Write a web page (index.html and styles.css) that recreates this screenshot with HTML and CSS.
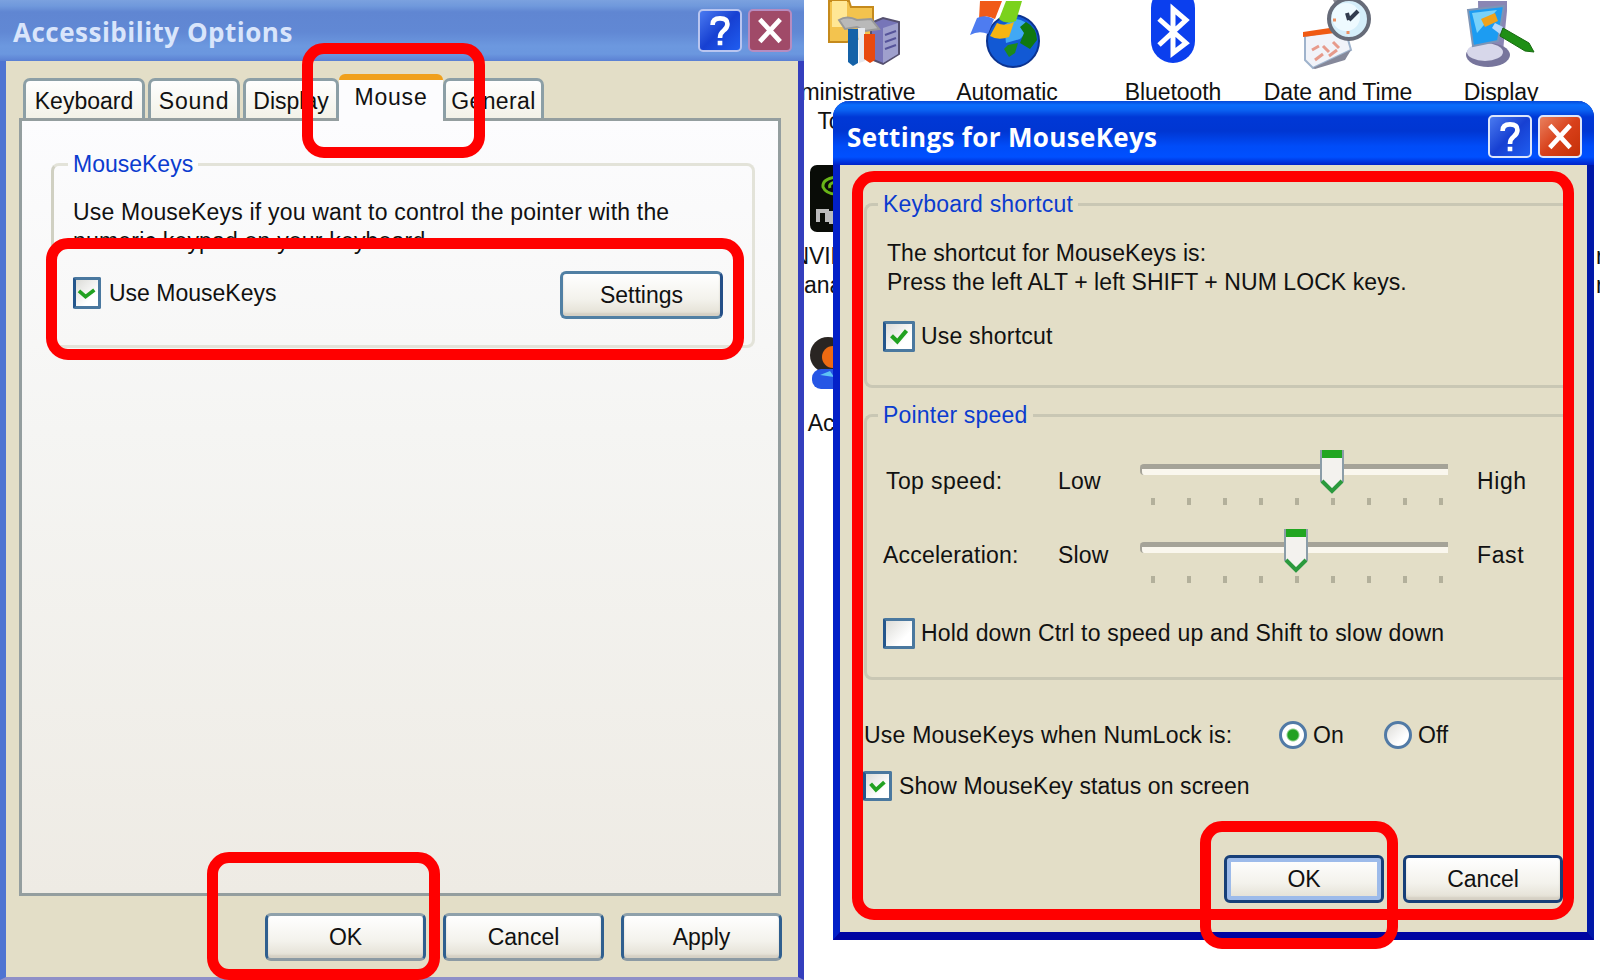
FILE: index.html
```html
<!DOCTYPE html>
<html lang="en">
<head>
  <meta charset="UTF-8" />
  <title>Accessibility Options</title>
  <link rel="stylesheet" href="styles.css">
</head>
<body>
  <div class="desktop">

    <!-- Control panel icons -->
    <div class="cp-item admin">
      <svg width="76" height="68" viewBox="0 0 76 68">
        <path d="M2 0H22L24 6H46V34L20 41H2Z" fill="#f3c34e" stroke="#c58a1c" stroke-width="2"/>
        <path d="M5 0H20V26H5Z" fill="#ffe795"/>
        <path d="M44 22L56 17L72 21V53L56 63L44 58Z" fill="#7775b8" stroke="#55506f" stroke-width="2"/>
        <path d="M56 27L71 22V53L56 62Z" fill="#9fa0cd"/>
        <path d="M58 34L69 30M58 41L69 37M58 48L69 44" stroke="#56549a" stroke-width="2"/>
        <path d="M12 19Q20 14 30 19L44 18L52 28L38 30L30 26L18 28Z" fill="#b9b9b9" stroke="#999" stroke-width="2"/>
        <path d="M21 28H31V62L26 65L21 61Z" fill="#1562a8"/>
        <path d="M31 27H38V60L32 62Z" fill="#e7e9ee"/>
        <path d="M37 33H48V59L43 62L37 58Z" fill="#e8490f"/>
      </svg>
      <p>Administrative<br>Tools</p>
    </div>
    <div class="cp-item auto">
      <svg width="74" height="68" viewBox="0 0 74 68">
        <circle cx="43" cy="40" r="26" fill="#1259d4" stroke="#0c3390" stroke-width="2"/>
        <path d="M44 18Q56 18 60 28L50 38L36 42L34 24Z" fill="#41a8f5"/>
        <path d="M56 21Q67 27 67 39L60 48L50 42L54 32L50 26Z" fill="#10780f"/>
        <path d="M38 44L48 42L45 52L39 56L34 48Z" fill="#1d8a1a"/>
        <path d="M10 0H32L25 18Q16 13 9 18Z" fill="#f05a18"/>
        <path d="M36 0H52L46 20Q36 24 29 18Z" fill="#7bd21c"/>
        <path d="M7 17Q15 13 24 18L18 33Q9 29 0 34Z" fill="#4e7cf0"/>
        <path d="M27 22Q35 26 44 21L39 36Q28 40 20 35Z" fill="#f7b512"/>
      </svg>
      <p>Automatic</p>
    </div>
    <div class="cp-item blue">
      <svg width="46" height="64" viewBox="0 0 46 64">
        <rect x="1" y="-14" width="44" height="77" rx="22" fill="#0b3fee"/>
        <path d="M9 19L36 43L23 53V9L36 20L9 45" fill="none" stroke="#fff" stroke-width="5"/>
      </svg>
      <p>Bluetooth</p>
    </div>
    <div class="cp-item date">
      <svg width="70" height="70" viewBox="0 0 70 70">
        <path d="M2 36L42 29L48 50L10 68L2 60Z" fill="#f1f3f9" stroke="#9fb3cc" stroke-width="2"/>
        <path d="M10 68L48 50L42 60L12 69Z" fill="#85889a"/>
        <path d="M0 32L40 26V32L0 37Z" fill="#f05a13"/>
        <path d="M9 50L16 46M20 46L26 52M30 42L36 48M12 60L20 54M26 56L34 50" stroke="#e79a8b" stroke-width="3"/>
        <path d="M30 0H56L50 8H34Z" fill="#8d8d96"/>
        <circle cx="46" cy="19" r="20" fill="#d5eefa" stroke="#666b78" stroke-width="4"/>
        <circle cx="43" cy="17" r="14" fill="#eefaff"/>
        <path d="M46 20L55 11M46 20L44 13" stroke="#333c4e" stroke-width="4"/>
        <path d="M45 31V34M30 20H33" stroke="#ec8f63" stroke-width="3"/>
      </svg>
      <p>Date and Time</p>
    </div>
    <div class="cp-item disp">
      <svg width="72" height="68" viewBox="0 0 72 68">
        <path d="M13 0H42V10L38 50H14Z" fill="#8a86b4"/>
        <ellipse cx="23" cy="54" rx="22" ry="12" fill="#77759c"/>
        <ellipse cx="20" cy="51" rx="18" ry="9" fill="#d7d7ea"/>
        <path d="M3 9L39 5L33 40L8 45Z" fill="#1c9cf2" stroke="#7e95b6" stroke-width="2"/>
        <path d="M7 12L32 9L12 32Z" fill="#79d2fa"/>
        <path d="M16 18L30 12L33 20L20 26Z" fill="#efa21b"/>
        <path d="M30 22L38 26L35 33L27 27Z" fill="#b8d8f8"/>
        <path d="M38 27L64 42L69 51L60 50L35 35Z" fill="#1f8f15" stroke="#176a10"/>
      </svg>
      <p>Display</p>
    </div>
    <div class="cp-item nvidia">
      <svg width="40" height="68" viewBox="0 0 40 68">
        <rect x="0" y="0" width="60" height="67" rx="7" fill="#090c07"/>
        <path d="M26 12Q12 14 13 22Q16 29 26 29M26 17Q18 18 20 23" fill="none" stroke="#69b518" stroke-width="3"/>
        <path d="M8 57V46H17V57M21 46V57H30" fill="none" stroke="#bbb" stroke-width="4"/>
      </svg>
      <p>NVIEW<br>Manager</p>
    </div>
    <div class="cp-item user">
      <svg width="40" height="52" viewBox="0 0 40 52">
        <circle cx="18" cy="18" r="18" fill="#292522"/>
        <circle cx="23" cy="20" r="11" fill="#ed6a12"/>
        <rect x="2" y="32" width="40" height="20" rx="9" fill="#2656e5"/>
        <path d="M10 38L20 34L24 40Z" fill="#5ec2f5"/>
      </svg>
      <p>User Accounts</p>
    </div>
    <div class="cp-item edge"><p>r<br>r</p></div>

    <!-- Accessibility Options -->
    <div class="window options">
      <div class="titlebar">
        <h1>Accessibility Options</h1>
        <span class="tb-btn help">
          <svg viewBox="0 0 42 42"><path d="M13 15Q13 8 21 8Q29 8 29 14Q29 18 25 21Q21 24 21 29M21 32V37" fill="none" stroke="#fff" stroke-width="5"/></svg>
        </span>
        <span class="tb-btn close">
          <svg viewBox="0 0 42 42"><path d="M10 9L32 33M32 9L10 33" stroke="#fff" stroke-width="5"/></svg>
        </span>
      </div>

      <div class="tabs">
        <div class="tab keyboard"><span>Keyboard</span></div>
        <div class="tab sound"><span>Sound</span></div>
        <div class="tab display"><span>Display</span></div>
        <div class="tab mouse active"><span>Mouse</span></div>
        <div class="tab general"><span>General</span></div>
      </div>

      <div class="panel">
        <fieldset>
          <legend>MouseKeys</legend>
          <p class="intro">Use MouseKeys if you want to control the pointer with the<br>numeric keypad on your keyboard.</p>
          <div class="use-row">
            <label class="check">
              <svg class="box" viewBox="0 0 30 30"><path d="M4 12L13 20L25 11" /></svg>
              <span>Use MouseKeys</span>
            </label>
            <button class="btn settings">Settings</button>
          </div>
        </fieldset>
      </div>

      <div class="buttons">
        <button class="btn">OK</button>
        <button class="btn">Cancel</button>
        <button class="btn">Apply</button>
      </div>
    </div>

    <!-- Settings for MouseKeys -->
    <div class="window mousekeys">
      <div class="titlebar">
        <h1>Settings for MouseKeys</h1>
        <span class="tb-btn help">
          <svg viewBox="0 0 42 42"><path d="M13 15Q13 8 21 8Q29 8 29 14Q29 18 25 21Q21 24 21 29M21 32V37" fill="none" stroke="#fff" stroke-width="5"/></svg>
        </span>
        <span class="tb-btn close">
          <svg viewBox="0 0 42 42"><path d="M10 9L32 33M32 9L10 33" stroke="#fff" stroke-width="5"/></svg>
        </span>
      </div>

      <div class="mk-body">
        <fieldset class="shortcut">
          <legend>Keyboard shortcut</legend>
          <p>The shortcut for MouseKeys is:<br>Press the left ALT + left SHIFT + NUM LOCK keys.</p>
          <label class="check">
            <svg class="box" viewBox="0 0 30 30"><path d="M6 14L13 21L24 8" /></svg>
            <span>Use shortcut</span>
          </label>
        </fieldset>

        <fieldset class="speed">
          <legend>Pointer speed</legend>
          <div class="slider-row top">
            <span class="name">Top speed:</span>
            <span class="from">Low</span>
            <div class="slider">
              <div class="track"></div>
              <div class="ticks"><i></i><i></i><i></i><i></i><i></i><i></i><i></i><i></i><i></i></div>
              <svg class="thumb" width="26" height="46" viewBox="0 0 26 46">
                <path d="M2 2H24V32L13 43L2 32Z" fill="#f3f2ee" stroke="#8b9da8" stroke-width="2"/>
                <path d="M3 1H23V9H3Z" fill="#21a621"/>
                <path d="M3 32L13 42L23 32" fill="none" stroke="#2b9a3d" stroke-width="4"/>
              </svg>
            </div>
            <span class="to">High</span>
          </div>
          <div class="slider-row accel">
            <span class="name">Acceleration:</span>
            <span class="from">Slow</span>
            <div class="slider">
              <div class="track"></div>
              <div class="ticks"><i></i><i></i><i></i><i></i><i></i><i></i><i></i><i></i><i></i></div>
              <svg class="thumb" width="26" height="46" viewBox="0 0 26 46">
                <path d="M2 2H24V32L13 43L2 32Z" fill="#f3f2ee" stroke="#8b9da8" stroke-width="2"/>
                <path d="M3 1H23V9H3Z" fill="#21a621"/>
                <path d="M3 32L13 42L23 32" fill="none" stroke="#2b9a3d" stroke-width="4"/>
              </svg>
            </div>
            <span class="to">Fast</span>
          </div>
          <label class="check hold">
            <svg class="box" viewBox="0 0 30 30"></svg>
            <span>Hold down Ctrl to speed up and Shift to slow down</span>
          </label>
        </fieldset>

        <div class="numlock">
          <span class="question">Use MouseKeys when NumLock is:</span>
          <span class="radio on"></span><span class="on-text">On</span>
          <span class="radio"></span><span>Off</span>
        </div>
        <label class="check status">
          <svg class="box" viewBox="0 0 30 30"><path d="M6 12L13 20L24 10" /></svg>
          <span>Show MouseKey status on screen</span>
        </label>

        <div class="mk-buttons">
          <button class="btn default">OK</button>
          <button class="btn">Cancel</button>
        </div>
      </div>
    </div>

    <!-- Red callouts -->
    <div class="mark mark-tab"></div>
    <div class="mark mark-use"></div>
    <div class="mark mark-ok"></div>
    <div class="mark mark-settings"></div>
    <div class="mark mark-ok2"></div>
  </div>
</body>
</html>
```
FILE: styles.css
```css
* {
  box-sizing: border-box;
}

body {
  margin: 0;
  background: #fff;
  font-family: "Liberation Sans", Arial, sans-serif;
  font-size: 23px;
  line-height: 29px;
  color: #111;
  overflow: hidden;
}

p, h1, fieldset, legend {
  margin: 0;
  padding: 0;
}

.desktop {
  position: relative;
  width: 1600px;
  height: 980px;
  overflow: hidden;
}

/* control panel icons */
.cp-item {
  position: absolute;
  top: 0;
  display: flex;
  flex-direction: column;
  align-items: center;
  text-align: center;
  white-space: nowrap;
}

.cp-item svg {
  height: 70px;
}

.cp-item p {
  margin-top: 8px;
  letter-spacing: -0.1px;
}

.admin { left: 770px; width: 148px; }
.admin svg { margin-left: 42px; }
.auto { left: 932px; width: 150px; }
.blue { left: 1098px; width: 150px; }
.blue svg { height: 64px; }
.blue p { margin-top: 14px; }
.date { left: 1258px; width: 160px; }
.disp { left: 1426px; width: 150px; }
.nvidia { left: 770px; top: 164px; width: 120px; }
.user { left: 758px; top: 337px; width: 140px; }
.user svg { height: 52px; margin-left: 4px; }
.user p { margin-top: 20px; }
.edge { left: 1596px; top: 234px; }

/* windows */
.window {
  position: absolute;
  background: #e3dec7;
}

.options {
  left: 0;
  top: 0;
  width: 804px;
  height: 980px;
  border: solid #4f74d2;
  border-width: 0 6px 3px;
  border-right-color: #343ebd;
  border-bottom-color: #8f90c8;
}

.mousekeys {
  left: 833px;
  top: 101px;
  width: 761px;
  height: 839px;
  border: solid #0320c8;
  border-width: 0 7px 8px;
  border-right-color: #0018a8;
  border-bottom-color: #0004a2;
  border-radius: 16px 16px 0 0;
}

.titlebar {
  display: flex;
  align-items: center;
}

.options .titlebar {
  height: 61px;
  margin: 0 -6px;
  padding: 0 12px 0 13px;
  background: linear-gradient(#7ba1df 0, #7099dc 6px, #6086d2 12px, #6188d4 32px, #6c98df 46px, #6b97df 54px, #5b80d3 61px);
}

.mousekeys .titlebar {
  height: 64px;
  margin: 0 -7px;
  padding: 6px 12px 0 14px;
  background: linear-gradient(#0548d8 0, #0a6dfc 4px, #0a62f2 9px, #0038d6 16px, #0036d2 30px, #004cf8 45px, #0050ff 56px, #0023c8 64px);
  border-radius: 16px 16px 0 0;
}

h1 {
  flex: 1;
  padding-top: 3px;
  font-family: "Open Sans", "Noto Sans", sans-serif;
  font-size: 26px;
  font-weight: 700;
  letter-spacing: 0.35px;
  color: #fff;
  white-space: nowrap;
}

.options h1 {
  color: #d9e5fb;
  letter-spacing: 0.5px;
}

.tb-btn {
  width: 44px;
  height: 43px;
  border: 2px solid #dce6fb;
  border-radius: 5px;
  margin-left: 6px;
}

.tb-btn svg {
  display: block;
  width: 100%;
  height: 100%;
}

.help { background: linear-gradient(135deg, #4a7af0, #1740d2 50%, #1f5df0); }
.close { background: linear-gradient(135deg, #e9805e, #d8401a 50%, #c53008); }

.options .tb-btn { border-color: #b9c5f0; }
.options .close { background: #a04a68; border-color: #b78cc0; }

/* tabs */
.tabs {
  display: flex;
  align-items: flex-end;
  height: 57px;
  padding-left: 17px;
}

.tab {
  height: 40px;
  border: 3px solid #8c9fa6;
  border-bottom: 0;
  border-radius: 7px 7px 0 0;
  background: linear-gradient(#fefefe, #f3f2e8);
  display: flex;
  justify-content: center;
  align-items: center;
  margin-right: 3px;
  padding-top: 4px;
}

.keyboard { width: 122px; }
.sound { width: 92px; letter-spacing: 0.8px; }
.display { width: 96px; margin-right: 0; }

.tab.active {
  width: 104px;
  height: 47px;
  margin: 0 0 -3px;
  padding-top: 0;
  padding-bottom: 6px;
  border: 0;
  border-top: 6px solid #f0a01c;
  background: #fcfcfe;
  border-radius: 6px 6px 0 0;
  position: relative;
  letter-spacing: 0.8px;
}

.general { width: 101px; letter-spacing: 0.4px; }

.panel {
  width: 762px;
  height: 778px;
  margin-left: 13px;
  padding: 29px 23px 0 29px;
  border: 3px solid #949e9f;
  background: linear-gradient(#fcfcfe, #f5f5f3 40%, #eeebe4);
}

fieldset {
  border: 3px solid #d0d0bf;
  border-radius: 8px;
  min-width: 0;
}

legend {
  color: #0b3ccf;
  padding: 0 5px;
}

.panel fieldset {
  height: 198px;
  padding: 0 6px 0 19px;
  border-color: #e3e3d9;
  border-left-color: #d0d0c2;
}

.panel legend {
  margin-left: -5px;
}

.intro {
  padding-top: 19px;
  letter-spacing: 0.19px;
  white-space: nowrap;
}

.use-row {
  display: flex;
  justify-content: space-between;
  align-items: center;
  margin-top: 15px;
  padding-right: 23px;
}

.use-row .check {
  padding-bottom: 4px;
}

.use-row .box { width: 28px; height: 32px; margin-right: 8px; }

.check {
  display: flex;
  align-items: center;
  white-space: nowrap;
}

.box {
  width: 32px;
  height: 31px;
  margin-right: 6px;
  border: 3px solid #4a789f;
  border-left-color: #24568c;
  border-radius: 2px;
  background: linear-gradient(135deg, #dcdcd8, #fff 70%);
}

.box path {
  fill: none;
  stroke: #21a121;
  stroke-width: 5;
}

.btn {
  width: 161px;
  height: 48px;
  padding: 0;
  border: 3px solid #2f5f8f;
  border-radius: 6px;
  background: linear-gradient(#fff, #f3f2ec 60%, #e2ded2);
  font: inherit;
  color: #111;
  box-shadow: inset 0 -3px 2px #d5d0c4;
}

.settings {
  width: 163px;
  border-color: #5180a4;
  border-right-color: #244f88;
}

.buttons {
  display: flex;
  gap: 17px;
  padding: 17px 0 0 259px;
}

.buttons .btn {
  border-top-color: #8fa1ab;
  border-bottom-color: #8c9aa3;
}

/* mousekeys dialog */
.mk-body {
  padding: 25px 24px 0;
}

.mk-body fieldset {
  border-color: #c9c7b4;
  border-right: 0;
  padding-left: 16px;
  border-radius: 8px 0 0 8px;
}

.shortcut { height: 198px; }
.shortcut p { padding-top: 20px; margin-left: 4px; letter-spacing: 0.07px; white-space: nowrap; }
.shortcut .check { margin-top: 24px; }
.shortcut .check span { letter-spacing: 0.2px; }

.speed {
  height: 279px;
  margin-top: 13px;
}

.mk-body legend { margin-left: -5px; letter-spacing: 0.2px; }

.slider-row {
  display: flex;
  align-items: flex-start;
  height: 74px;
}

.slider-row.top { margin-top: 28px; }

.slider-row span { padding-top: 9px; }
.slider-row .name { width: 175px; padding-left: 3px; letter-spacing: 0.4px; white-space: nowrap; }
.accel .name { padding-left: 0; letter-spacing: 0.2px; }
.from { width: 82px; letter-spacing: 0.2px; }
.to { margin-left: 29px; letter-spacing: 0.6px; }

.slider {
  position: relative;
  width: 308px;
  padding-top: 6px;
}

.accel .slider { padding-top: 10px; }

.track {
  height: 11px;
  border: solid #a5a398;
  border-width: 5px 0 0 2px;
  background: #faf7ee;
  border-radius: 4px 0 0 4px;
}

.ticks {
  display: flex;
  justify-content: space-between;
  padding: 23px 5px 0 11px;
}

.ticks i {
  width: 4px;
  height: 7px;
  background: #b3b09b;
}

.thumb {
  position: absolute;
  left: 179px;
  top: -9px;
}

.accel .thumb {
  left: 143px;
  top: -4px;
}

.hold { margin-top: 12px; }
.hold span { letter-spacing: 0.19px; }

.numlock {
  display: flex;
  align-items: center;
  height: 30px;
  margin-top: 40px;
  white-space: nowrap;
}

.question { width: 415px; letter-spacing: 0.22px; }

.radio {
  width: 28px;
  height: 28px;
  margin-right: 6px;
  border: 3px solid #517aa6;
  border-radius: 50%;
  background: linear-gradient(135deg, #dddcd8, #fff 70%);
}

.radio.on {
  background: radial-gradient(circle, #21a121 5px, #fff 7px);
}

.on-text { width: 71px; }

.status { margin: 21px 0 0 -1px; }
.status .box { width: 29px; height: 30px; margin-right: 7px; }
.status span { letter-spacing: 0.1px; }

.mk-buttons {
  display: flex;
  gap: 19px;
  padding: 54px 0 0 360px;
}

.mk-buttons .btn {
  width: 160px;
  border-color: #173f78;
  flex: none;
}

.mk-buttons .default {
  box-shadow: inset 0 0 0 4px #9dbbea;
}

/* red callouts */
.mark {
  position: absolute;
  border: 11px solid #f00;
  border-radius: 22px;
}

.mark-tab { left: 302px; top: 43px; width: 183px; height: 115px; }
.mark-use { left: 46px; top: 238px; width: 698px; height: 122px; }
.mark-ok { left: 207px; top: 852px; width: 233px; height: 128px; }
.mark-settings { left: 852px; top: 171px; width: 722px; height: 749px; }
.mark-ok2 { left: 1200px; top: 821px; width: 198px; height: 128px; }
```
